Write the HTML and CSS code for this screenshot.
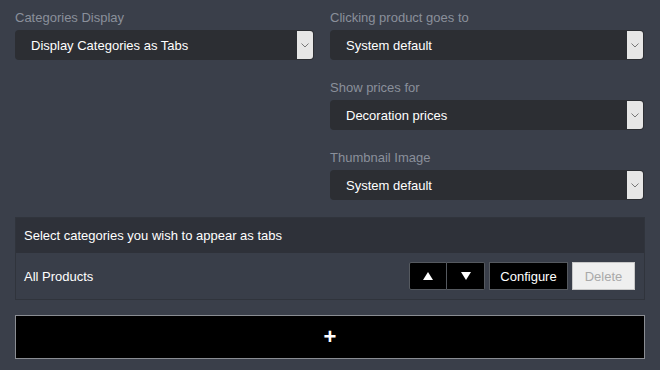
FILE: index.html
```html
<!DOCTYPE html>
<html>
<head>
<meta charset="utf-8">
<link rel="stylesheet" href="styles.css">
</head>
<body>
<div class="page">
  <div class="cols">
    <div class="col col-left">
      <div class="field">
        <div class="label">Categories Display</div>
        <div class="select"><span class="value">Display Categories as Tabs</span><span class="arrow"><svg width="8" height="5" viewBox="0 0 8 5"><polyline points="0.5,0.5 4,4 7.5,0.5" fill="none" stroke="#777" stroke-width="1"/></svg></span></div>
      </div>
    </div>
    <div class="col col-right">
      <div class="field">
        <div class="label">Clicking product goes to</div>
        <div class="select"><span class="value">System default</span><span class="arrow"><svg width="8" height="5" viewBox="0 0 8 5"><polyline points="0.5,0.5 4,4 7.5,0.5" fill="none" stroke="#777" stroke-width="1"/></svg></span></div>
      </div>
      <div class="field">
        <div class="label">Show prices for</div>
        <div class="select"><span class="value">Decoration prices</span><span class="arrow"><svg width="8" height="5" viewBox="0 0 8 5"><polyline points="0.5,0.5 4,4 7.5,0.5" fill="none" stroke="#777" stroke-width="1"/></svg></span></div>
      </div>
      <div class="field">
        <div class="label">Thumbnail Image</div>
        <div class="select"><span class="value">System default</span><span class="arrow"><svg width="8" height="5" viewBox="0 0 8 5"><polyline points="0.5,0.5 4,4 7.5,0.5" fill="none" stroke="#777" stroke-width="1"/></svg></span></div>
      </div>
    </div>
  </div>
  <div class="panel">
    <div class="panel-head">Select categories you wish to appear as tabs</div>
    <div class="panel-row">
      <span class="row-name">All Products</span>
      <div class="actions">
        <div class="move">
          <button class="btn btn-icon"><svg width="10" height="8" viewBox="0 0 10 8"><polygon points="5,0 10,8 0,8" fill="#fff"/></svg></button>
          <button class="btn btn-icon btn-join"><svg width="10" height="8" viewBox="0 0 10 8"><polygon points="0,0 10,0 5,8" fill="#fff"/></svg></button>
        </div>
        <button class="btn btn-text">Configure</button>
        <button class="btn btn-disabled">Delete</button>
      </div>
    </div>
  </div>
  <button class="add">+</button>
</div>
</body>
</html>
```

FILE: styles.css
```css
* { box-sizing: border-box; }
html, body {
  margin: 0;
  padding: 0;
  background: #3a3f4a;
  font-family: "Liberation Sans", Arial, sans-serif;
  font-size: 13px;
  color: #fff;
}
.page {
  padding: 0 15px;
  width: 660px;
  height: 370px;
  overflow: hidden;
}
.cols {
  display: grid;
  grid-template-columns: 1fr 1fr;
}
.col-left { padding-right: 16px; }
.col-right { padding-right: 1px; }
.field {
  padding-top: 10px;
  display: flex;
  flex-direction: column;
  gap: 5px;
}
.field + .field { padding-top: 20px; }
.label {
  color: #8a909b;
  line-height: 15px;
  height: 15px;
}
.select {
  height: 30px;
  background: #2c2e33;
  border-radius: 4px;
  display: flex;
  align-items: center;
  justify-content: space-between;
  padding: 1px 1px 1px 16px;
}
.value {
  color: #fff;
  font-size: 13px;
}
.arrow {
  width: 16px;
  height: 28px;
  background: #e6e6e6;
  border-radius: 0 3px 3px 0;
  display: flex;
  align-items: center;
  justify-content: center;
}
.panel {
  margin-top: 17px;
  border: 1px solid #30343c;
}
.panel-head {
  height: 35px;
  background: #2e3139;
  display: flex;
  align-items: center;
  padding-left: 8px;
  color: #fff;
}
.panel-row {
  height: 46px;
  display: flex;
  align-items: center;
  justify-content: space-between;
  padding: 0 9px 0 8px;
  background: #393e49;
}
.actions {
  display: flex;
  gap: 4px;
  align-items: center;
}
.move { display: flex; }
.btn {
  height: 28px;
  font-family: "Liberation Sans", Arial, sans-serif;
  font-size: 13px;
  background: #000;
  color: #fff;
  border: 1px solid #55595f;
  border-radius: 0;
  margin: 0;
  padding: 0;
  display: flex;
  align-items: center;
  justify-content: center;
}
.btn-icon { width: 38px; }
.btn-icon:first-child { border-radius: 2px 0 0 2px; }
.btn-join { border-left: none; width: 38px; border-radius: 0 2px 2px 0; }
.btn-text { width: 79px; }
.btn-disabled {
  width: 63px;
  background: #efefef;
  color: #a9a9a9;
  border: 1px solid #c8c8c8;
}
.add {
  margin-top: 15px;
  width: 100%;
  height: 44px;
  background: #000;
  border: 1px solid #8a8d93;
  color: #fff;
  font-family: "Liberation Sans", Arial, sans-serif;
  font-size: 22px;
  font-weight: bold;
  display: flex;
  align-items: center;
  justify-content: center;
  padding: 0;
}
```
